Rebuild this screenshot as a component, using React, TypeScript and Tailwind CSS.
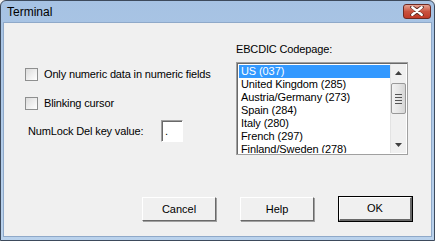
import React from "react";

const CODEPAGES = [
  "US (037)",
  "United Kingdom (285)",
  "Austria/Germany (273)",
  "Spain (284)",
  "Italy (280)",
  "French (297)",
  "Finland/Sweden (278)",
];

const FONT = "[font-family:'Liberation_Sans',Arial,sans-serif]";

function Checkbox({ label }: { label: string }) {
  return (
    <div className="flex items-center h-[13px] gap-[6px]">
      <div className="w-[13px] h-[13px] border border-[#8e8f8f] bg-gradient-to-br from-[#dcdcdc] to-[#ffffff]" />
      <span className="text-[11px] leading-[13px] tracking-[-0.15px] text-black">{label}</span>
    </div>
  );
}

function WinButton({ label, isDefault }: { label: string; isDefault?: boolean }) {
  if (isDefault) {
    return (
      <div className="w-[75px] h-[26px] border border-black">
        <div className="w-full h-full bg-[#f0f0f0] border-t border-l border-white border-r-2 border-b-2 border-r-[#696969] border-b-[#696969] flex items-center justify-center text-[11px] text-black">
          {label}
        </div>
      </div>
    );
  }
  return (
    <div className="w-[74px] h-[24px] mt-[1px] bg-[#f0f0f0] border-t border-l border-white border-r border-b border-r-[#696969] border-b-[#696969] shadow-[1px_1px_0_#a0a0a0] flex items-center justify-center text-[11px] text-black">
      {label}
    </div>
  );
}

function ScrollBar() {
  return (
    <div className="w-[16px] h-full bg-[#f0f0f0] flex flex-col items-center border-l border-[#e3e3e3]">
      <div className="h-[17px] w-full flex items-center justify-center">
        <svg width="7" height="4" viewBox="0 0 7 4">
          <path d="M0 4 L3.5 0 L7 4 Z" fill="#404040" />
        </svg>
      </div>
      <div className="w-[15px] h-[31px] mt-[2px] rounded-[2px] border border-[#999] bg-gradient-to-r from-[#f2f2f2] via-[#e6e6e6] to-[#d6d6d6] flex flex-col items-center justify-center gap-[2px]">
        <div className="w-[7px] h-[1px] bg-[#555]" />
        <div className="w-[7px] h-[1px] bg-[#555]" />
        <div className="w-[7px] h-[1px] bg-[#555]" />
        <div className="w-[7px] h-[1px] bg-[#555]" />
      </div>
      <div className="flex-1" />
      <div className="h-[17px] w-full flex items-center justify-center">
        <svg width="7" height="4" viewBox="0 0 7 4">
          <path d="M0 0 L7 0 L3.5 4 Z" fill="#404040" />
        </svg>
      </div>
    </div>
  );
}

export default function App() {
  return (
    <div className={`w-[435px] h-[241px] bg-[#f0f0f0] ${FONT}`}>
      <div className="w-full h-full flex flex-col border border-[#3d4a5c] rounded-t-[6px] bg-gradient-to-b from-[#a6c2e3] to-[#bad2ec] overflow-hidden">
        {/* title bar */}
        <div className="h-[21px] flex items-center justify-between pl-[6px] pr-[3px]">
          <span className="text-[12px] text-black leading-none mt-[1px]">Terminal</span>
          <div className="w-[28px] h-[15px] mb-[1px] rounded-[3px] border border-[#6e2a23] bg-gradient-to-b from-[#e5a393] via-[#c9523f] to-[#c03a28] flex items-center justify-center">
            <svg width="14" height="10" viewBox="0 0 14 10">
              <path
                d="M2 1 L7 4.2 L12 1 M2 9 L7 5.8 L12 9"
                stroke="#5a2a22"
                strokeWidth="3.6"
                strokeLinecap="round"
                fill="none"
              />
              <path
                d="M2.3 1.3 L11.7 8.7 M11.7 1.3 L2.3 8.7"
                stroke="#ffffff"
                strokeWidth="2.4"
                strokeLinecap="round"
                fill="none"
              />
            </svg>
          </div>
        </div>
        {/* client area */}
        <div className="flex-1 mx-[2px] mb-[3px] bg-[#f0f0f0] border border-[#8fa9c9] flex flex-col">
          <div className="flex flex-1">
            <div className="w-[232px] pl-[21px] pt-[45px] flex flex-col">
              <Checkbox label="Only numeric data in numeric fields" />
              <div className="mt-[16px]">
                <Checkbox label="Blinking cursor" />
              </div>
              <div className="mt-[10px] pl-[3px] flex items-center">
                <span className="w-[133px] text-[11px] tracking-[-0.15px] text-black">NumLock Del key value:</span>
                <div className="w-[22px] h-[22px] bg-white border-t border-l border-[#a0a0a0] border-r border-b border-r-white border-b-white shadow-[inset_1px_1px_0_#696969] flex items-center pl-[3px] text-[11px] leading-none">
                  .
                </div>
              </div>
            </div>
            <div className="pt-[20px] flex flex-col">
              <span className="text-[11px] leading-[13px] tracking-[-0.15px] text-black">EBCDIC Codepage:</span>
              <div className="mt-[6px] w-[172px] h-[93px] bg-white border border-[#a0a0a0] shadow-[inset_1px_1px_0_#696969] flex p-[1px]">
                <div className="flex-1 flex flex-col pt-[1px] pl-[1px] overflow-hidden">
                  {CODEPAGES.map((cp, i) => (
                    <div
                      key={cp}
                      className={`h-[13px] shrink-0 pl-[2px] text-[11px] leading-[13px] tracking-[-0.1px] whitespace-nowrap ${
                        i === 0 ? "bg-[#3399ff] text-white" : "text-black"
                      }`}
                    >
                      {cp}
                    </div>
                  ))}
                </div>
                <ScrollBar />
              </div>
            </div>
          </div>
          <div className="flex justify-end items-start gap-[24px] pr-[18px] pb-[14px]">
            <WinButton label="Cancel" />
            <WinButton label="Help" />
            <WinButton label="OK" isDefault />
          </div>
        </div>
      </div>
    </div>
  );
}
